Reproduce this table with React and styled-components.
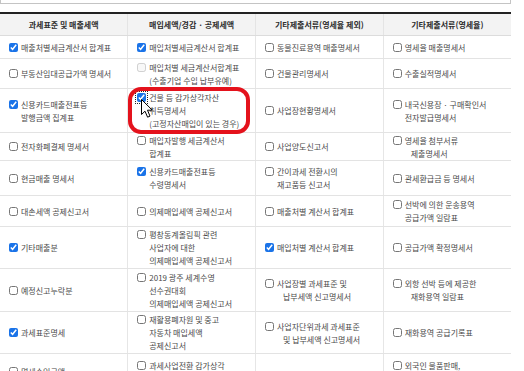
import React from 'react'
import styled, { createGlobalStyle } from 'styled-components'

const GlobalStyle = createGlobalStyle`
  body {
    margin: 0;
    background: #fff;
    font-family: "Noto Sans CJK KR", "Noto Sans", sans-serif;
  }
`

const Page = styled.div`
  width: 511px;
`

const PrevBox = styled.div`
  height: 3px;
  border: 1px solid #c4c4c4;
  border-top: none;
  margin-bottom: 8px;
`

const Table = styled.table`
  width: 511px;
  border-collapse: collapse;
  table-layout: fixed;
  border-top: 2px solid #222;
`

const Th = styled.th`
  height: 21px;
  padding: 0;
  background: #f3f3f3;
  color: #2e2e2e;
  font-size: 8px;
  font-weight: bold;
  text-align: center;
  border-bottom: 1px solid #dcdcdc;
  border-right: 1px solid #e4e4e4;
  &:last-child { border-right: none; }
`

const Tr = styled.tr`
  height: ${p => p.$h}px;
`

const Td = styled.td`
  position: relative;
  padding: 0 9px;
  vertical-align: middle;
  border-bottom: 1px solid #e3e3e3;
  border-right: 1px solid #e6e6e6;
  &:last-child { border-right: none; }
`

const Item = styled.div`
  display: flex;
  align-items: flex-start;
  gap: 3px;
`

const Check = styled.input`
  flex: none;
  width: 9px;
  height: 9px;
  margin: 2px 0 0;
  accent-color: #1a73e8;
  outline: ${p => (p.$focus ? '1px dotted #222' : 'none')};
  outline-offset: 1px;
`

const Label = styled.div`
  font-size: 8px;
  line-height: 13px;
  color: #4a4a4a;
  white-space: nowrap;
`

const Line = styled.span`
  display: block;
  padding-left: ${p => (p.$indent ? 6 : 0)}px;
`

const Mark = styled.div`
  position: absolute;
  left: 0;
  right: 5px;
  top: -2px;
  bottom: -2px;
  border: 4px solid #e4121c;
  border-radius: 13px;
  pointer-events: none;
`

const Pointer = styled.svg`
  position: absolute;
  left: 13px;
  top: 10px;
  width: 12px;
  height: 19px;
  pointer-events: none;
`

const heads = ['과세표준 및 매출세액', '매입세액/경감 · 공제세액', '기타제출서류(영세율 제외)', '기타제출서류(영세율)']

const rows = [
  { h: 23, cells: [
    { on: 1, lines: ['매출처별세금계산서 합계표'] },
    { on: 1, lines: ['매입처별세금계산서 합계표'] },
    { lines: ['동물진료용역 매출명세서'] },
    { lines: ['영세율 매출명세서'] },
  ] },
  { h: 30, cells: [
    { lines: ['부동산임대공급가액 명세서'] },
    { off: 1, lines: ['매입처별 세금계산서합계표', '(수출기업 수입 납부유예)'] },
    { lines: ['건물관리명세서'] },
    { lines: ['수출실적명세서'] },
  ] },
  { h: 44, cells: [
    { on: 1, lines: ['신용카드매출전표등', '발행금액 집계표'] },
    { on: 1, focus: 1, mark: 1, lines: ['건물 등 감가상각자산', '취득명세서', '(고정자산매입이 있는 경우)'] },
    { lines: ['사업장현황명세서'] },
    { lines: ['내국신용장 · 구매확인서', '전자발급명세서'] },
  ] },
  { h: 28, cells: [
    { lines: ['전자화폐결제 명세서'] },
    { lines: ['매입자발행 세금계산서', '합계표'] },
    { lines: ['사업양도신고서'] },
    { lines: ['영세율 첨부서류', ' 제출명세서'] },
  ] },
  { h: 35, cells: [
    { lines: ['현금매출 명세서'] },
    { on: 1, lines: ['신용카드매출전표등', '수령명세서'] },
    { lines: ['간이과세 전환시의', '재고품등 신고서'] },
    { lines: ['관세환급금 등 명세서'] },
  ] },
  { h: 31, cells: [
    { lines: ['대손세액 공제신고서'] },
    { lines: ['의제매입세액 공제신고서'] },
    { lines: ['매출처별 계산서 합계표'] },
    { lines: ['선박에 의한 운송용역', '공급가액 일람표'] },
  ] },
  { h: 42, cells: [
    { on: 1, lines: ['기타매출분'] },
    { lines: ['평창동계올림픽 관련', '사업자에 대한', '의제매입세액 공제신고서'] },
    { on: 1, lines: ['매입처별 계산서 합계표'] },
    { lines: ['공급가액 확정명세서'] },
  ] },
  { h: 43, cells: [
    { lines: ['예정신고누락분'] },
    { lines: ['2019 광주 세계수영', '선수권대회', '의제매입세액 공제신고서'] },
    { lines: ['사업장별 과세표준 및', ' 납부세액 신고명세서'] },
    { lines: ['외항 선박 등에 제공한', ' 재화용역 일람표'] },
  ] },
  { h: 42, cells: [
    { on: 1, lines: ['과세표준명세'] },
    { lines: ['재활용폐자원 및 중고', '자동차 매입세액', '공제신고서'] },
    { lines: ['사업자단위과세 과세표준', ' 및 납부세액 신고명세서'] },
    { lines: ['재화용역 공급기록표'] },
  ] },
  { h: 36, cells: [
    { lines: ['면세수입금액'] },
    { lines: ['과세사업전환 감가상각', '자산 신고서'] },
    { lines: [] },
    { lines: ['외국인 물품판매,', '환급실적 명세서'] },
  ] },
]

function Cell({ cell }) {
  if (!cell.lines.length) return <Td />
  return (
    <Td>
      <Item>
        <Check type="checkbox" defaultChecked={!!cell.on} disabled={!!cell.off} $focus={cell.focus} />
        <Label>
          {cell.lines.map((t, i) => (
            <Line key={i} $indent={t.startsWith(' ')}>{t.trim()}</Line>
          ))}
        </Label>
      </Item>
      {cell.mark && (
        <>
          <Mark />
          <Pointer viewBox="0 0 12 19">
            <path d="M0.5 0.5 L0.5 15.5 L4 12.2 L6.6 18.2 L9 17.1 L6.5 11.2 L11.3 11.2 Z" fill="#fff" stroke="#000" strokeWidth="1" strokeLinejoin="round" />
          </Pointer>
        </>
      )}
    </Td>
  )
}

export default function App() {
  return (
    <Page>
      <GlobalStyle />
      <PrevBox />
      <Table>
        <thead>
          <tr>
            {heads.map(h => <Th key={h}>{h}</Th>)}
          </tr>
        </thead>
        <tbody>
          {rows.map((r, i) => (
            <Tr key={i} $h={r.h}>
              {r.cells.map((c, j) => <Cell key={j} cell={c} />)}
            </Tr>
          ))}
        </tbody>
      </Table>
    </Page>
  )
}
